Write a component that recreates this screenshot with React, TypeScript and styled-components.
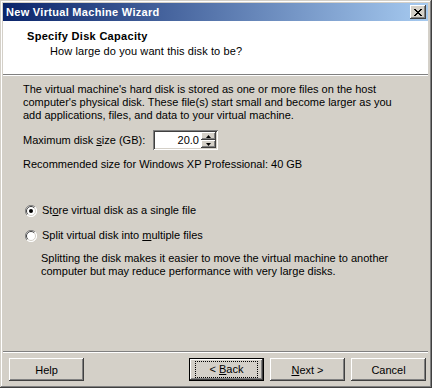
import React from "react";
import styled, {createGlobalStyle} from "styled-components";

const GlobalStyle = createGlobalStyle`
	html, body { margin: 0; padding: 0; background: #d4d0c8; }
	body { font-family: "Liberation Sans", Arial, sans-serif; font-size: 11px; color: #000; }
`

const Window = styled.div`
	box-sizing: border-box;
	width: 432px;
	height: 388px;
	display: flex;
	flex-direction: column;
	padding: 3px 4px 4px 3px;
	background: #d4d0c8;
	box-shadow: inset -1px -1px #404040, inset 1px 1px #d4d0c8, inset -2px -2px #808080, inset 2px 2px #fff;
`

const TitleBar = styled.div`
	height: 18px;
	display: flex;
	align-items: center;
	justify-content: space-between;
	padding: 0 2px 0 3px;
	background: linear-gradient(to right, #0a246a, #a6caf0);
	color: #fff;
	font-weight: bold;
	font-size: 11px;
	letter-spacing: 0.3px;
`

const CloseBtn = styled.div`
	width: 16px;
	height: 14px;
	box-sizing: border-box;
	background: #d4d0c8;
	box-shadow: inset -1px -1px #404040, inset 1px 1px #fff, inset -2px -2px #808080;
	display: flex;
	align-items: center;
	justify-content: center;
`

const Header = styled.div`
	height: 54px;
	background: #fff;
	padding: 9px 0 0 24px;
	box-sizing: border-box;
	border-bottom: 1px solid #808080;
	box-shadow: 0 1px 0 #fff;
	margin-bottom: 1px;
	line-height: 13px;
`

const HeadTitle = styled.div`
	font-weight: bold;
	letter-spacing: 0.3px;
`

const HeadSub = styled.div`
	margin: 2px 0 0 23px;
	letter-spacing: 0.1px;
`

const Body = styled.div`
	flex: 1;
	padding: 7px 0 0 20px;
	line-height: 13px;
`

const Para = styled.p<{ $top?: number; $left?: number }>`
	margin: ${(p) => p.$top ?? 0}px 0 0 ${(p) => p.$left ?? 0}px;
`

const SizeRow = styled.div`
	display: flex;
	align-items: center;
	margin-top: 8px;
	height: 20px;
`

const SizeLabel = styled.span`
	width: 130px;
`

const SpinBox = styled.div`
	width: 65px;
	height: 20px;
	box-sizing: border-box;
	background: #fff;
	display: flex;
	padding: 2px;
	box-shadow: inset 1px 1px #808080, inset -1px -1px #fff, inset 2px 2px #404040, inset -2px -2px #d4d0c8;
`

const SpinValue = styled.div`
	flex: 1;
	text-align: right;
	padding-right: 2px;
	line-height: 16px;
`

const SpinArrows = styled.div`
	width: 15px;
	display: flex;
	flex-direction: column;
`

const SpinArrow = styled.div`
	flex: 1;
	background: #d4d0c8;
	box-shadow: inset -1px -1px #404040, inset 1px 1px #fff, inset -2px -2px #808080;
	display: flex;
	align-items: center;
	justify-content: center;
`

const RadioRow = styled.label<{ $top: number }>`
	display: flex;
	align-items: center;
	gap: 5px;
	height: 13px;
	margin: ${(p) => p.$top}px 0 0 2px;
`

const Footer = styled.div`
	border-top: 1px solid #808080;
	box-shadow: inset 0 1px #fff;
	padding: 6px 2px 3px 6px;
	display: flex;
	gap: 6px;
`

const Spacer = styled.div`
	flex: 1;
`

const Button = styled.div<{ $default?: boolean }>`
	width: 75px;
	height: 23px;
	box-sizing: border-box;
	display: flex;
	align-items: center;
	justify-content: center;
	background: #d4d0c8;
	box-shadow: ${(p) =>
		p.$default
			? "inset 0 0 0 1px #000, inset -2px -2px #404040, inset 2px 2px #fff, inset -3px -3px #808080"
			: "inset -1px -1px #404040, inset 1px 1px #fff, inset -2px -2px #808080, inset 2px 2px #d4d0c8"};
`

const Focus = styled.span`
	outline: 1px dotted #000;
	padding: 1px 3px;
	width: 61px;
	box-sizing: border-box;
	text-align: center;
	line-height: 13px;
`

const Radio = ({checked}: { checked?: boolean }) => (
	<svg width="12" height="12" viewBox="0 0 12 12">
		<circle cx="6" cy="6" r="5.5" fill="#fff" />
		<path d="M10 2 A5.5 5.5 0 0 0 2 10" stroke="#808080" fill="none" strokeWidth="1" />
		<path d="M9.2 2.8 A4.5 4.5 0 0 0 2.8 9.2" stroke="#404040" fill="none" strokeWidth="1" />
		<path d="M2 10 A5.5 5.5 0 0 0 10 2" stroke="#fff" fill="none" strokeWidth="1" />
		<path d="M2.8 9.2 A4.5 4.5 0 0 0 9.2 2.8" stroke="#d4d0c8" fill="none" strokeWidth="1" />
		{checked && <circle cx="6" cy="6" r="2" fill="#000" />}
	</svg>
);

const App = () => {
	return (
		<>
			<GlobalStyle />
			<Window>
				<TitleBar>
					<span>New Virtual Machine Wizard</span>
					<CloseBtn>
						<svg width="8" height="7" viewBox="0 0 8 7">
							<path d="M0 0 L7 7 M1 0 L8 7 M7 0 L0 7 M8 0 L1 7" stroke="#000" strokeWidth="1" />
						</svg>
					</CloseBtn>
				</TitleBar>
				<Header>
					<HeadTitle>Specify Disk Capacity</HeadTitle>
					<HeadSub>How large do you want this disk to be?</HeadSub>
				</Header>
				<Body>
					<Para>
						The virtual machine's hard disk is stored as one or more files on the host<br />
						computer's physical disk. These file(s) start small and become larger as you<br />
						add applications, files, and data to your virtual machine.
					</Para>
					<SizeRow>
						<SizeLabel>Maximum disk <u>s</u>ize (GB):</SizeLabel>
						<SpinBox>
							<SpinValue>20.0</SpinValue>
							<SpinArrows>
								<SpinArrow>
									<svg width="5" height="3" viewBox="0 0 5 3"><path d="M2.5 0 L5 3 L0 3Z" fill="#000" /></svg>
								</SpinArrow>
								<SpinArrow>
									<svg width="5" height="3" viewBox="0 0 5 3"><path d="M0 0 L5 0 L2.5 3Z" fill="#000" /></svg>
								</SpinArrow>
							</SpinArrows>
						</SpinBox>
					</SizeRow>
					<Para $top={8}>Recommended size for Windows XP Professional: 40 GB</Para>
					<RadioRow $top={33}>
						<Radio checked />
						<span>St<u>o</u>re virtual disk as a single file</span>
					</RadioRow>
					<RadioRow $top={12}>
						<Radio />
						<span>Split virtual disk into <u>m</u>ultiple files</span>
					</RadioRow>
					<Para $top={10} $left={18}>
						Splitting the disk makes it easier to move the virtual machine to another<br />
						computer but may reduce performance with very large disks.
					</Para>
				</Body>
				<Footer>
					<Button>Help</Button>
					<Spacer />
					<Button $default><Focus>&lt; <u>B</u>ack</Focus></Button>
					<Button><u>N</u>ext &gt;</Button>
					<Button>Cancel</Button>
				</Footer>
			</Window>
		</>
	);
};

export default App;
